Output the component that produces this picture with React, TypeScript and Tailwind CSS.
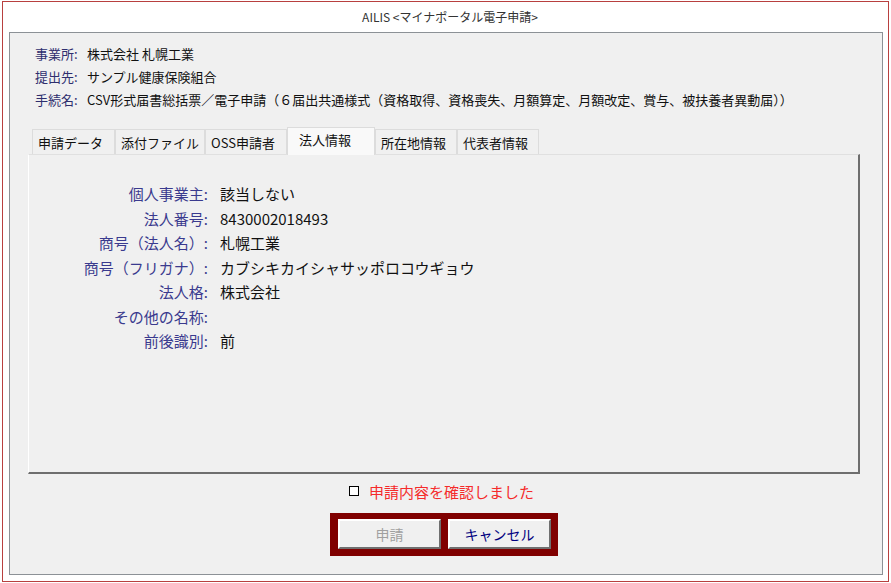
const font = { fontFamily: '"Noto Sans CJK JP", "Noto Sans", sans-serif' }

type Tab = { label: string; width: string; active?: boolean }

const tabs: Tab[] = [
  { label: '申請データ', width: 'w-[83px]' },
  { label: '添付ファイル', width: 'w-[90px]' },
  { label: 'OSS申請者', width: 'w-[82px]' },
  { label: '法人情報', width: 'w-[88px]', active: true },
  { label: '所在地情報', width: 'w-[82px]' },
  { label: '代表者情報', width: 'w-[82px]' },
]

const rows: [string, string][] = [
  ['個人事業主', '該当しない'],
  ['法人番号', '8430002018493'],
  ['商号（法人名）', '札幌工業'],
  ['商号（フリガナ）', 'カブシキカイシャサッポロコウギョウ'],
  ['法人格', '株式会社'],
  ['その他の名称', ''],
  ['前後識別', '前'],
]

const header: [string, string][] = [
  ['事業所', '株式会社 札幌工業'],
  ['提出先', 'サンプル健康保険組合'],
  ['手続名', 'CSV形式届書総括票／電子申請（６届出共通様式（資格取得、資格喪失、月額算定、月額改定、賞与、被扶養者異動届））'],
]

export default function App() {
  return (
    <div className="w-[891px] h-[583px] bg-white pt-[1px] pl-[2px]" style={font}>
      <div className="w-[887px] h-[581px] border border-[#b8403f] flex flex-col">
        {/* title */}
        <div className="h-[30px] flex items-center justify-center pl-[9px] text-[12px] text-[#333] whitespace-pre">
          {'AILIS <マイナポータル電子申請>'}
        </div>

        <div className="ml-[6px] mr-[5px] mb-[6px] flex-1 border border-[#8c9196] bg-[#f0f0f0] flex flex-col">
          {/* header info */}
          <div className="pt-[9px] pl-[25px] text-[13px] leading-[23px]">
            {header.map(([k, v]) => (
              <div key={k} className="flex whitespace-nowrap">
                <span className="w-[52px] text-[#2e2e6e]">{k}:</span>
                <span className="text-[#111]">{v}</span>
              </div>
            ))}
          </div>

          {/* tabs */}
          <div className="mt-[16px] ml-[18px] pl-[4px] h-[27px] flex items-end">
            {tabs.map((t) =>
              t.active ? (
                <div
                  key={t.label}
                  className={`${t.width} h-[28px] -mb-px relative z-10 bg-[#f9f9f9] border border-b-0 border-[#dcdcdc] pl-[11px] pt-[2px] text-[13px] text-[#111] whitespace-nowrap`}
                >
                  {t.label}
                </div>
              ) : (
                <div
                  key={t.label}
                  className={`${t.width} h-[25px] bg-[#f0f0f0] border border-b-0 border-[#dcdcdc] pl-[5px] pt-[3px] text-[13px] text-[#111] whitespace-nowrap`}
                >
                  {t.label}
                </div>
              )
            )}
          </div>

          {/* panel */}
          <div className="ml-[18px] w-[832px] h-[320px] bg-[#f0f0f0] border-t border-t-[#e0e0e0] border-l border-l-white border-r-2 border-r-[#6e6e6e] border-b-2 border-b-[#6e6e6e] pt-[27px] text-[15px] leading-[24.5px]">
            {rows.map(([k, v]) => (
              <div key={k} className="flex whitespace-nowrap">
                <span className="w-[179px] text-right text-[#3a3a8e]">{k}:</span>
                <span className="ml-[12px] text-[#111]">{v}</span>
              </div>
            ))}
          </div>

          {/* confirm */}
          <div className="mt-[9px] pl-[339px] h-[16px] flex items-center gap-[10px]">
            <span className="w-[10px] h-[10px] border border-black bg-white" />
            <span className="text-[15px] text-[#f52a2a] leading-none">申請内容を確認しました</span>
          </div>

          {/* buttons */}
          <div className="mt-[14px] ml-[320px] w-[228px] h-[43px] bg-[#800000] pl-[8px] pt-[6px] flex gap-[7px]">
            <button className="w-[103px] h-[30px] bg-[#f0f0f0] border-2 border-t-white border-l-white border-r-[#6f6f6f] border-b-[#6f6f6f] text-[14px] text-[#a0a0a0]">
              申請
            </button>
            <button className="w-[103px] h-[30px] bg-[#f0f0f0] border-2 border-t-white border-l-white border-r-[#6f6f6f] border-b-[#6f6f6f] text-[14px] text-[#000080]">
              キャンセル
            </button>
          </div>
        </div>
      </div>
    </div>
  )
}
